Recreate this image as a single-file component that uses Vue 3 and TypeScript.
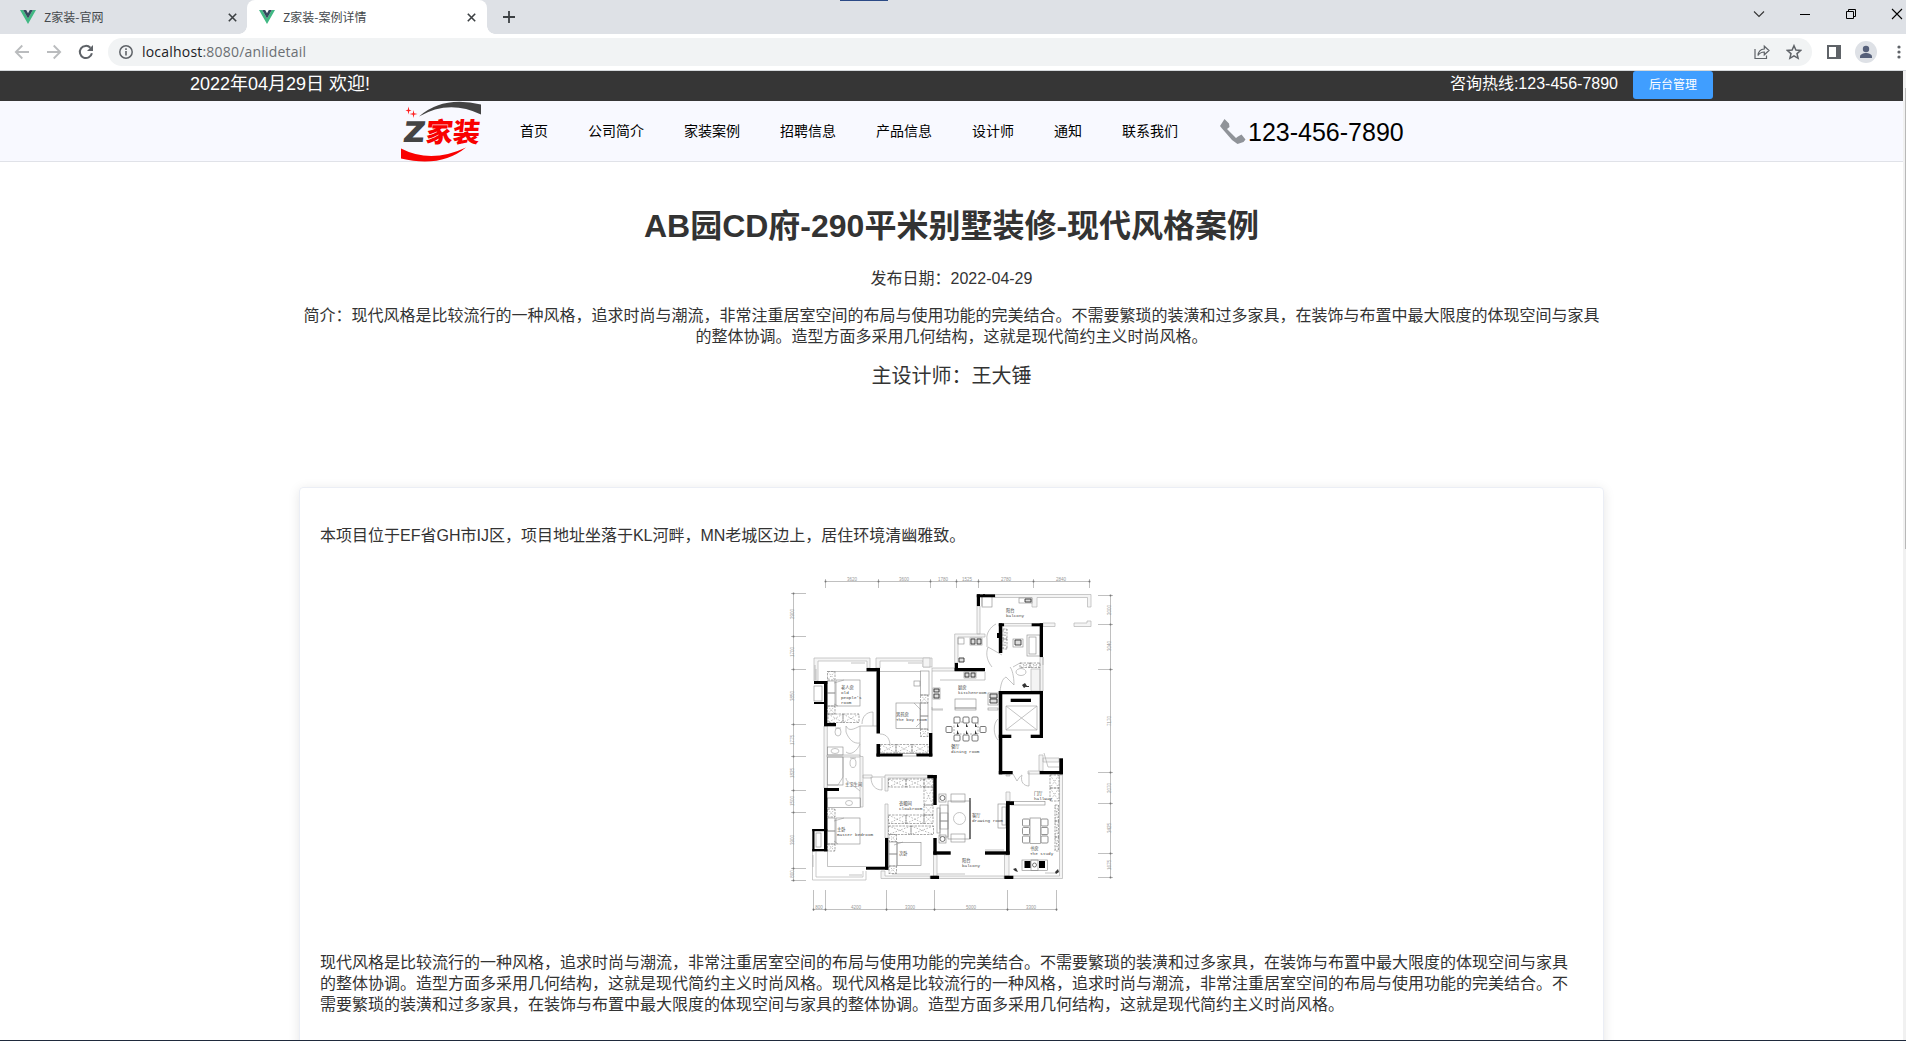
<script setup lang="ts">
type Box = [number, number, number, number]
interface Label { x: number; y: number; zh: string; en: string; en2?: string }

const tabs = [
  { title: 'Z家装-官网', active: false },
  { title: 'Z家装-案例详情', active: true },
]
const menu = ['首页', '公司简介', '家装案例', '招聘信息', '产品信息', '设计师', '通知', '联系我们']

const intro = [
  '简介：现代风格是比较流行的一种风格，追求时尚与潮流，非常注重居室空间的布局与使用功能的完美结合。不需要繁琐的装潢和过多家具，在装饰与布置中最大限度的体现空间与家具',
  '的整体协调。造型方面多采用几何结构，这就是现代简约主义时尚风格。',
]
const description = [
  '现代风格是比较流行的一种风格，追求时尚与潮流，非常注重居室空间的布局与使用功能的完美结合。不需要繁琐的装潢和过多家具，在装饰与布置中最大限度的体现空间与家具',
  '的整体协调。造型方面多采用几何结构，这就是现代简约主义时尚风格。现代风格是比较流行的一种风格，追求时尚与潮流，非常注重居室空间的布局与使用功能的完美结合。不',
  '需要繁琐的装潢和过多家具，在装饰与布置中最大限度的体现空间与家具的整体协调。造型方面多采用几何结构，这就是现代简约主义时尚风格。',
]

// Load-bearing walls as [left, top, right, bottom]
const walls: Box[] = [
  [866.5, 669, 880, 672.3], [876.5, 669, 880, 734.5],
  [814, 682, 827.3, 685], [824, 682, 827.3, 727], [824, 724, 836, 727.3], [814, 703, 824, 705],
  [929, 734, 932.3, 757.5], [876.5, 754.5, 902.5, 757.5], [916.5, 754.5, 932.3, 757.5], [876.5, 745, 880, 757.5],
  [954.7, 664, 958, 672], [954.7, 669, 985, 672.3],
  [976.8, 595.3, 995, 598.3], [976.8, 595.3, 980, 607],
  [998.8, 624.3, 1002.3, 654], [998.8, 624.3, 1004, 627.3], [1031.7, 624.3, 1043, 627.3], [1039.7, 624.3, 1043, 658], [997, 634, 999, 639],
  [998.8, 692, 1043, 695.3], [998.8, 692, 1002.3, 775.3], [1039.7, 692, 1043, 739], [998.8, 735.7, 1011.3, 739], [1030.7, 735.7, 1043, 739],
  [1010.7, 699.7, 1031, 703],
  [998.8, 772, 1012.7, 775.3], [1039.7, 772, 1063, 775.3], [1059.3, 759.3, 1063, 775.3],
  [1006, 802.3, 1014, 806], [1006, 802.3, 1009.7, 855.7], [985, 852.3, 1009.7, 855.7], [933.3, 852.3, 950.7, 855.7], [933.3, 839, 936.7, 855.7],
  [1004.3, 876.7, 1013.3, 880], [930.3, 876.7, 939, 880],
  [927.3, 776, 936.7, 779.3], [933.3, 776, 936.7, 806],
  [885, 839, 888.3, 870.7], [866, 867.7, 888.3, 870.7],
  [824, 789, 827.3, 852.3], [824, 789, 839, 792],
  [812.3, 830, 827.3, 832.2], [812.3, 830, 814.5, 852.3], [812.3, 850, 827.3, 852.3],
  [1024.5, 862, 1030.5, 869], [1039, 862, 1045, 869],
]

// Wardrobes and cabinets, drawn with crossed panels
const cabinets: Box[] = [
  [828, 715, 843, 723.5], [843, 715, 859, 723.5],
  [880.5, 745.5, 896, 754], [896, 745.5, 912, 754], [912, 745.5, 928, 754],
  [888.5, 780, 906, 788], [906, 780, 924, 788], [924, 780, 933, 788],
  [924, 788, 933, 806], [924, 806, 933, 816],
  [888.5, 816, 906, 824.5], [906, 816, 924, 824.5], [924, 816, 933, 824.5],
  [888.5, 827, 911, 835.5], [911, 827, 933.5, 835.5],
  [827.5, 672.5, 835, 681], [827.5, 707, 835, 715], [920.5, 696, 928, 704], [920.5, 730, 928, 737.5],
  [827.5, 810, 835, 818], [827.5, 845, 835, 852], [889, 835.5, 896.5, 842.5], [889, 867, 896.5, 874.5],
  [1020, 664, 1030, 668.5], [1030, 664, 1040, 668.5],
  [1003, 630, 1007, 640], [1003, 640, 1007, 650],
  [1050, 776, 1059, 789], [1050, 789, 1059, 802],
  [1055, 806, 1058.5, 822], [1055, 822, 1058.5, 838], [1055, 838, 1058.5, 852],
]

const outlines: Box[] = [
  [836, 681, 860, 707], [827.5, 682, 835, 694], [827.5, 694, 835, 707],
  [896, 704, 920, 729.5], [920.5, 704, 928, 717], [920.5, 717, 928, 730],
  [836, 819, 860, 845], [827.5, 819, 835, 832], [827.5, 832, 835, 845],
  [897, 843.5, 921, 866.5], [889, 843, 897, 855], [889, 855, 897, 867],
  [920.5, 672, 929, 696], [914, 682, 920, 687],
  [955, 700, 976, 709], [955, 709, 976, 711],
  [827.5, 758, 843, 786], [827.5, 799, 860.5, 808.5], [827.5, 748, 843, 756],
  [902.5, 754.5, 916.5, 757], [988, 694, 998, 706], [988, 709, 998, 711],
  [1027, 636, 1040, 657], [1029, 638, 1036, 655], [1013, 640, 1023, 648],
  [940, 806, 948, 838], [937, 809, 940, 834], [940, 814, 948, 822], [940, 822, 948, 830],
  [948, 802, 970, 840], [951, 795, 965, 803], [951, 835, 965, 843],
  [939, 795, 946, 803], [939, 836, 946, 844],
  [998, 805, 1006, 829], [1002, 808, 1006, 826],
  [1022, 861, 1047.5, 871.5], [1031, 861, 1038, 871.5],
  [982, 596.5, 992, 608], [1019, 599, 1032, 604], [970, 639, 982, 646], [958, 639, 964, 645], [964, 673, 976, 679],
  [933, 689, 940, 700], [814, 687, 822, 702], [816, 834, 821, 848], [1011, 802.5, 1045, 806],
]

const dining: [number, number][] = [
  [954, 718], [963, 718], [972, 718], [954, 736], [963, 736], [972, 736], [946, 727.5], [980, 727.5],
]
const studyChairs: [number, number][] = [
  [1022.5, 820], [1022.5, 828.5], [1022.5, 837], [1041, 820], [1041, 828.5], [1041, 837],
]

const topTicks = [825.5, 878.5, 930.5, 956.5, 978.5, 1033.5, 1089.5]
const topLabels = [[852, '3620'], [904, '3600'], [943, '1780'], [967, '1525'], [1006, '2780'], [1061, '2840']] as [number, string][]
const leftTicks = [594.5, 637.5, 670.5, 725.5, 757.5, 791.5, 813.5, 869.5, 881.5]
const leftLabels = [[615, '2900'], [653, '1700'], [697, '3850'], [741, '1775'], [774, '1825'], [802, '1500'], [841, '3900'], [875, '800']] as [number, string][]
const rightTicks = [596.5, 625.5, 670.5, 773.5, 804.5, 854.5, 878.5]
const rightLabels = [[611, '2000'], [647, '3040'], [722, '7170'], [789, '2070'], [829, '3425'], [866, '1675']] as [number, string][]
const bottomTicks = [813.5, 825.5, 886.5, 934.5, 1007.5, 1056.5]
const bottomLabels = [[819, '800'], [856, '4200'], [910, '3300'], [971, '5000'], [1031, '3300']] as [number, string][]

const rooms: Label[] = [
  { x: 841, y: 690, zh: '老人房', en: 'old', en2: "people's" },
  { x: 896, y: 716.5, zh: '男孩房', en: 'The boy room' },
  { x: 958, y: 690, zh: '厨房', en: 'kitchenroom' },
  { x: 951, y: 748.5, zh: '餐厅', en: 'dining room' },
  { x: 972, y: 818, zh: '客厅', en: 'drawing room' },
  { x: 962, y: 863, zh: '阳台', en: 'balcony' },
  { x: 1030, y: 851, zh: '书房', en: 'The study' },
  { x: 837, y: 832, zh: '主卧', en: 'master bedroom' },
  { x: 1034, y: 796, zh: '门厅', en: 'hallway' },
  { x: 899, y: 805.5, zh: '衣帽间', en: 'cloakroom' },
  { x: 1006, y: 613, zh: '阳台', en: 'balcony' },
  { x: 899, y: 856, zh: '次卧', en: '' },
  { x: 845, y: 787, zh: '主卫生间', en: '' },
]

const crossPath = ([l, t, r, b]: Box): string => `M${l} ${t}L${r} ${b}M${r} ${t}L${l} ${b}`
</script>

<template>
  <div class="window">
    <div class="tabstrip">
      <div class="top-sliver"></div>
      <div v-for="tab in tabs" :key="tab.title" class="tab" :class="{ active: tab.active }">
        <svg class="vue" width="16" height="14" viewBox="0 0 16 14">
          <path d="M0 0h3.2L8 8.4 12.8 0H16L8 14z" fill="#41b883" />
          <path d="M3.2 0h3L8 3.2 9.8 0h3L8 8.4z" fill="#35495e" />
        </svg>
        <span class="tab-title">{{ tab.title }}</span>
        <svg class="tab-x" width="9" height="9" viewBox="0 0 9 9"><path d="M.8.8l7.4 7.4M8.2.8L.8 8.2" stroke="#3c4043" stroke-width="1.6" /></svg>
      </div>
      <svg class="plus" width="12" height="12" viewBox="0 0 12 12"><path d="M6 0v12M0 6h12" stroke="#3c4043" stroke-width="1.8" /></svg>
      <div class="controls">
        <svg width="12" height="12" viewBox="0 0 12 12"><path d="M1 3.5l5 5 5-5" fill="none" stroke="#333" stroke-width="1.1" /></svg>
        <svg width="12" height="12" viewBox="0 0 12 12"><path d="M1 6.5h10" stroke="#000" /></svg>
        <svg width="12" height="12" viewBox="0 0 12 12"><path d="M1.5 3.5h7v7h-7zM3.5 3.5v-2h7v7h-2" fill="none" stroke="#000" /></svg>
        <svg width="12" height="12" viewBox="0 0 12 12"><path d="M1 1l10 10M11 1L1 11" stroke="#000" stroke-width="1.1" /></svg>
      </div>
    </div>

    <div class="toolbar">
      <div class="nav-icons">
        <svg width="16" height="16" viewBox="0 0 16 16"><path d="M15 8H2M8.3 1.5L1.8 8l6.5 6.5" fill="none" stroke="#babcbe" stroke-width="1.8" /></svg>
        <svg width="16" height="16" viewBox="0 0 16 16"><path d="M1 8h13M7.7 1.5L14.2 8l-6.5 6.5" fill="none" stroke="#babcbe" stroke-width="1.8" /></svg>
        <svg width="16" height="16" viewBox="0 0 16 16"><path d="M13.9 9.3A6.1 6.1 0 1 1 12.4 3.8" fill="none" stroke="#5f6368" stroke-width="2" /><path d="M15 1v6H9z" fill="#5f6368" /></svg>
      </div>
      <div class="omnibox">
        <svg width="14" height="14" viewBox="0 0 14 14"><circle cx="7" cy="7" r="6.2" fill="none" stroke="#5f6368" stroke-width="1.5" /><path d="M7 6v4.500M7 3.300v1.600" stroke="#5f6368" stroke-width="1.6" /></svg>
        <span class="url"><b>localhost</b>:8080/anlidetail</span>
        <svg class="share" width="16" height="16" viewBox="0 0 16 16"><path d="M1 5v9.500h11.500v-3" fill="none" stroke="#5f6368" stroke-width="1.2" /><path d="M4 11.500c.3-4 2.500-6.300 6.300-6.500V2.200l4.700 4.300-4.700 4.300V8C7.500 8 5.500 9.200 4 11.500z" fill="none" stroke="#5f6368" stroke-width="1.2" /></svg>
        <svg width="16" height="16" viewBox="0 0 16 16"><path d="M8 1.700l1.900 4.400 4.700.4-3.600 3.100 1.100 4.700L8 11.800l-4.100 2.500L5 9.600 1.400 6.500l4.700-.4z" fill="none" stroke="#5f6368" stroke-width="1.5" /></svg>
      </div>
      <svg class="panel" width="14" height="14" viewBox="0 0 14 14"><path d="M0 0h14v14H0zM2 2v10h7V2z" fill="#5f6368" fill-rule="evenodd" /></svg>
      <svg class="avatar" width="22" height="22" viewBox="0 0 22 22"><circle cx="11" cy="11" r="11" fill="#dee1e6" /><circle cx="11" cy="8" r="3.2" fill="#56607a" /><path d="M5 17v-1.500c0-2.300 3.500-3.500 6-3.500s6 1.200 6 3.500V17z" fill="#56607a" /></svg>
      <svg class="dots" width="4" height="14" viewBox="0 0 4 14"><g fill="#5f6368"><circle cx="2" cy="2" r="1.6" /><circle cx="2" cy="7" r="1.6" /><circle cx="2" cy="12" r="1.6" /></g></svg>
    </div>

    <div class="viewport">
      <main class="page">
        <div class="topbar">
          <span class="today">2022年04月29日 欢迎!</span>
          <span class="hotline">咨询热线:123-456-7890</span>
          <button class="admin">后台管理</button>
        </div>

        <header class="header">
          <svg class="logo" width="80" height="60" viewBox="0 0 80 60">
            <path d="M18 14.500Q42-6.500 80 2.500V12.500Q48-3 18 14.500z" fill="#444" />
            <path d="M0 46.500Q30 62 65 45.500Q40 66 0 56.500z" fill="#f90000" />
            <path d="M7.500 4.500l.7 3.300 2.300.7-2.300.7-.7 3.300-.7-3.300-2.300-.7 2.300-.7zM12.500 8l.7 3.300 3.300.7-3.300.7-.7 3.300-.7-3.300-3.300-.7 3.300-.7z" fill="#f22" />
            <text transform="translate(1.5 40) skewX(-8)" class="logo-z" textLength="21" lengthAdjust="spacingAndGlyphs">Z</text>
            <text transform="translate(24 39.7) skewX(-6)" class="logo-cn" textLength="54" lengthAdjust="spacingAndGlyphs">家装</text>
          </svg>
          <nav class="menu">
            <a v-for="item in menu" :key="item">{{ item }}</a>
          </nav>
          <svg class="phone" width="26" height="25" viewBox="0 0 26 25"><path d="M4.500 0L9 4.500 9.500 8 7 10l9 9 2-1.500 3.500-2 4 5-2 2.500-6 2L12 21 2 9.500 0 7z" fill="#909399" /></svg>
          <span class="phone-number">123-456-7890</span>
        </header>

        <section class="summary">
          <h1>AB园CD府-290平米别墅装修-现代风格案例</h1>
          <p class="date">发布日期：2022-04-29</p>
          <p class="intro"><span v-for="line in intro" :key="line">{{ line }}</span></p>
          <p class="designer">主设计师：王大锤</p>
        </section>

        <article class="card">
          <p>本项目位于EF省GH市IJ区，项目地址坐落于KL河畔，MN老城区边上，居住环境清幽雅致。</p>

          <svg class="plan" width="350" height="355" viewBox="777 565 350 355">
            <!-- dimension chains -->
            <g stroke="#b0b0b0" stroke-width=".8" fill="none">
              <path d="M825 582.500H1090M793.500 594V882M1110.500 596V879M813 910.500H1057" />
              <path v-for="x in topTicks" :key="'t' + x" :d="`M${x} 580V589`" />
              <path v-for="y in leftTicks" :key="'l' + y" :d="`M791 ${y}H806`" />
              <path v-for="y in rightTicks" :key="'r' + y" :d="`M1098 ${y}H1113`" />
              <path v-for="x in bottomTicks" :key="'b' + x" :d="`M${x} 891V912`" />
            </g>
            <g fill="#777">
              <circle v-for="x in topTicks" :key="x" :cx="x" cy="582.5" r="1" />
              <circle v-for="y in leftTicks" :key="y" cx="793.5" :cy="y" r="1" />
              <circle v-for="y in rightTicks" :key="y" cx="1110.5" :cy="y" r="1" />
              <circle v-for="x in bottomTicks" :key="x" :cx="x" cy="910.5" r="1" />
            </g>
            <g class="dim">
              <text v-for="[x, s] in topLabels" :key="x" :x="x" y="582">{{ s }}</text>
              <text v-for="[x, s] in bottomLabels" :key="x" :x="x" y="910">{{ s }}</text>
              <text v-for="[y, s] in leftLabels" :key="y" :transform="`translate(793.5 ${y}) rotate(-90)`">{{ s }}</text>
              <text v-for="[y, s] in rightLabels" :key="y" :transform="`translate(1110.5 ${y}) rotate(-90)`">{{ s }}</text>
            </g>

            <!-- thin outer walls and windows -->
            <g fill="#f4f4f4" stroke="#b5b5b5" stroke-width=".7">
              <path d="M814 659H870V669H867V662H818V682H814z" />
              <path d="M876 659H932V668H923V662H880V669H876z" />
              <path d="M923 659h7v9h-7z" />
              <path d="M932 669H955V672H932z" />
              <path d="M995 595.500H1091V608H1087.500V598.500H1037V608H1032V598.500H995z" />
              <path d="M1043 624H1055V627.500H1043zM1074 624H1087V622H1091V627.500H1074zM1004 624.500H1032V627H1004z" />
              <path d="M977 607H980V635H977zM954.700 635H985V638H958V664H954.700z" />
              <path d="M1040 658H1043V692H1040zM1031 670H1040V692H1031z" />
              <path d="M824 727H827.300V789H824z" />
              <path d="M812.500 852V881H866V872M816 852V878H863V872" fill="none" />
              <path d="M881 872V879.500H930V877H885V872zM939 877H1004V879.500H939zM1013 877H1059.500V776H1062.500V879.500H1013z" />
              <path d="M885 776H933V779H888V792H885zM885 805H888V839H885z" />
              <path d="M860 757.500H863V808H860zM827 756H860V758H827zM863 776H872V779H863z" />
              <path d="M1006 776H1010V777H1006zM1006 793H1010V802H1006zM1028 772H1040V775H1028zM1039 756H1043V772H1039zM1043 759H1059V763H1043z" />
              <path d="M1004.500 856H1009V877H1004.500zM933.500 856H937V877H933.500z" />
            </g>
            <g fill="none" stroke="#aaa" stroke-width=".7">
              <path d="M827 672.500H876M880 672.500H920M932 672V757M827.500 852V867.500H866M940 681H985V673M860 727H880M860 727V757M932 710H943M932 708V711H943" />
              <path d="M862 725C862 717 867 713 873 713V727M880 735C887 735 890 740 890 747M860 727C854 730 849 733 846 727V733C849 741 854 745 860 744M846 753C851 757 857 752 860 745" />
              <path d="M871 778C871 787 876 791 882 791V779M860 792C852 785 846 783 846 779M872 778H885M982 607V596M996 625C990 628 986 635 987 640M997 638M987 640V648M1002 656L988 648C985 656 988 663 992 668M1000 692C1001 685 1002 680 1006 678L1014 686C1014 677 1012 670 1010 668" />
              <path d="M1013 775L1017 782C1020 777 1022 776 1022 776C1020 783 1024 787 1029 787V773M1013 668L1020 664M1043 658V666M827.500 786H838L843 778V758" />
              <path d="M834 684L844 681M834 705L838 707M914 704L921 711M916 728L921 723M834 822L844 819M834 842L838 845M894 846L903 843" />
              <circle cx="959.5" cy="819.5" r="6" />
              <ellipse cx="838" cy="733" rx="3" ry="4" /><path d="M835 729H841" />
              <ellipse cx="853" cy="764" rx="3" ry="4.5" /><path d="M850 759H856" />
              <ellipse cx="1021" cy="673" rx="5" ry="3.5" />
              <ellipse cx="835" cy="752" rx="4" ry="2.5" /><ellipse cx="849" cy="804" rx="3.5" ry="2.5" />
              <path d="M1006 707H1037V731H1006zM1006 707L1037 731M1037 707L1006 731" />
              <path d="M998 720C993 724 993 736 998 741M815 666V681M851 664H865M908 664H922M813 856V868M849 876H862M892 875H930M937 875H965M985 851H1004M1045 874H1056M1044 754L1048 768H1059M816 670V681" />
            </g>

            <g fill="none" stroke="#888" stroke-width=".6">
              <rect v-for="(b, i) in outlines" :key="'o' + i" :x="b[0]" :y="b[1]" :width="b[2] - b[0]" :height="b[3] - b[1]" />
            </g>
            <g fill="none" stroke="#888" stroke-width=".7">
              <g v-for="(b, i) in cabinets" :key="'c' + i">
                <rect :x="b[0]" :y="b[1]" :width="b[2] - b[0]" :height="b[3] - b[1]" stroke-dasharray="2.5 1" />
                <path :d="crossPath(b)" stroke-dasharray="1.5 1.5" stroke-width=".6" />
              </g>
            </g>
            <g fill="#fff" stroke="#555" stroke-width=".8">
              <rect x="954" y="723" width="24" height="12" stroke-dasharray="2 1.5" stroke="#999" />
              <rect v-for="([x, y], i) in dining" :key="'d' + i" :x="x" :y="y" width="6" height="6" rx="1" />
              <rect v-for="([x, y], i) in studyChairs" :key="'s' + i" :x="x" :y="y" width="7" height="7" rx="1" stroke="#777" />
              <rect x="1030" y="819" width="10.5" height="25.5" stroke="#999" />
              <path d="M970 799V840" stroke-width="1.5" />
              <circle cx="942.5" cy="799" r="2.5" /><circle cx="942.5" cy="840" r="2.5" /><circle cx="1034.5" cy="866" r="2" />
            </g>
            <!-- hobs, sinks and appliances -->
            <g fill="#ddd" stroke="#333" stroke-width=".9">
              <path d="M971 640h4v5h-4zM977 640h4v5h-4zM959 659h5v4h-5zM965 674h4v4h-4zM971 674h4v4h-4zM934 690h5v3h-5zM934 695h5v4h-5zM1025 600h6v3h-6zM1015 641h6v5h-6zM990 695h7v4h-7zM990 700h7v4h-7z" />
            </g>
            <g fill="#333">
              <path d="M1022 686l3-2 2 3-3 2zM1026 687h3v1h-3zM1013 870l3-1 2 4-3-1zM1055 873l3-3 1 3-3 2zM957 724l2 4-2 0zM966 724l2 4-2 0zM975 724l2 4-2 0zM957 731l2 4-2 0zM966 731l2 4-2 0zM975 731l2 4-2 0zM983 595h2v1h-2z" />
            </g>

            <g fill="#000">
              <rect v-for="(b, i) in walls" :key="'w' + i" :x="b[0]" :y="b[1]" :width="b[2] - b[0]" :height="b[3] - b[1]" />
            </g>

            <g class="room">
              <g v-for="(r, i) in rooms" :key="i">
                <text :x="r.x" :y="r.y">{{ r.zh }}</text>
                <text :x="r.x" :y="r.y + 5">{{ r.en }}</text>
                <template v-if="r.en2">
                  <text :x="r.x" :y="r.y + 10">{{ r.en2 }}</text>
                  <text :x="r.x" :y="r.y + 15">room</text>
                </template>
              </g>
            </g>
          </svg>

          <p class="desc"><span v-for="line in description" :key="line">{{ line }}</span></p>
        </article>
      </main>
      <div class="scrollbar"><div class="thumb"></div></div>
    </div>
    <div class="taskbar-edge"></div>
  </div>
</template>

<style>
body {
  margin: 0;
  overflow: hidden;
}
</style>

<style scoped>
.window {
  width: 1906px;
  height: 1041px;
  display: flex;
  flex-direction: column;
  overflow: hidden;
  background: #fff;
  font-family: "Liberation Sans", "Noto Sans CJK SC", sans-serif;
}
svg { display: block; flex: none; }
p, h1 { margin: 0; }

.tabstrip {
  position: relative;
  height: 34px;
  flex: none;
  display: flex;
  align-items: center;
  background: #dee1e6;
}
.top-sliver {
  position: absolute;
  left: 840px;
  top: 0;
  width: 48px;
  height: 1px;
  background: #2b4a86;
}
.tab {
  position: relative;
  box-sizing: border-box;
  width: 247px;
  height: 34px;
  padding: 0 10px 0 20px;
  display: flex;
  align-items: center;
  font: 12px/16px "Noto Sans CJK SC", sans-serif;
  color: #45494d;
}
.tab.active {
  width: 240px;
  padding-left: 12px;
  padding-right: 11px;
  background: #fff;
  border-radius: 8px 8px 0 0;
}
.tab.active::before,
.tab.active::after {
  content: "";
  position: absolute;
  bottom: 0;
  width: 8px;
  height: 8px;
}
.tab.active::before { left: -8px; background: radial-gradient(circle at 0 0, transparent 7.5px, #fff 8px); }
.tab.active::after { right: -8px; background: radial-gradient(circle at 100% 0, transparent 7.5px, #fff 8px); }
.tab-title { flex: 1; margin-left: 8px; white-space: nowrap; }
.plus { margin-left: 16px; }
.controls { margin-left: auto; margin-bottom: 6px; padding-right: 3px; display: flex; gap: 34px; }

.toolbar {
  box-sizing: border-box;
  height: 37px;
  flex: none;
  padding: 4px 5px 4px 14px;
  display: flex;
  align-items: center;
  border-bottom: 1px solid #d5d9dc;
}
.nav-icons { display: flex; gap: 16px; width: 94px; }
.omnibox {
  box-sizing: border-box;
  width: 1704px;
  height: 28px;
  padding: 0 10px 0 11px;
  display: flex;
  align-items: center;
  border-radius: 14px;
  background: #f1f3f4;
}
.url {
  flex: 1;
  margin-left: 9px;
  font: 14px/20px "Open Sans", sans-serif;
  letter-spacing: 0.2px;
  color: #6b6f73;
}
.url b { font-weight: 400; color: #202124; }
.share { margin-right: 16px; }
.panel { margin-left: 15px; }
.avatar { margin-left: 14px; }
.dots { margin-left: auto; }

.viewport { flex: 1; min-height: 0; display: flex; overflow: hidden; }
.page { width: 1903px; flex: none; color: #333; }
.scrollbar { width: 3px; background: #f1f1f1; padding-top: 17px; }
.thumb { height: 461px; margin-left: 2px; background: #b8b8b8; }
.taskbar-edge { height: 1px; flex: none; background: #1f2a3c; }

.topbar {
  height: 30px;
  padding: 0 190px;
  display: flex;
  background: #363636;
  color: #fff;
}
.today { font-size: 18px; line-height: 26px; }
.hotline { margin-left: auto; font-size: 16px; line-height: 26px; }
.admin {
  width: 80px;
  height: 28px;
  margin-left: 15px;
  padding: 0;
  border: 0;
  border-radius: 3px;
  background: #409eff;
  color: #fff;
  font: 12px/28px "Liberation Sans", "Noto Sans CJK SC", sans-serif;
}

.header {
  height: 60px;
  padding-left: 401px;
  display: flex;
  align-items: center;
  background: #f8f9ff;
  border-bottom: 1px solid #e0e2e8;
}
.logo { overflow: visible; position: relative; top: 1px; }
.logo-z { font: 900 29px "Open Sans", sans-serif; fill: #444; }
.logo-cn { font: 900 27px "Noto Sans CJK SC", sans-serif; fill: #f90000; }
.menu {
  margin-left: 39px;
  margin-bottom: 1px;
  display: flex;
  gap: 40px;
  font-size: 14px;
  line-height: 20px;
  color: #000;
}
.phone { margin-left: 42px; margin-top: 1px; }
.phone-number { margin: 2px 0 0 2px; font-size: 25px; line-height: 30px; color: #000; }

.summary { text-align: center; overflow: hidden; }
.summary h1 { margin-top: 42px; font-size: 32px; line-height: 44px; }
.date { margin-top: 20px; font-size: 16px; line-height: 22px; }
.intro { margin-top: 15px; font-size: 16px; line-height: 21px; }
.intro span, .desc span { display: block; white-space: nowrap; }
.designer { margin-top: 16px; font-size: 20px; line-height: 26px; }

.card {
  box-sizing: border-box;
  width: 1305px;
  height: 620px;
  margin: 98px auto 0;
  padding: 37px 20px 0;
  border: 1px solid #ebeef5;
  border-radius: 4px;
  box-shadow: 0 2px 12px rgba(0, 0, 0, 0.1);
  font-size: 16px;
  line-height: 21px;
}
.plan { margin: 18px auto 0; }
.desc { margin-top: 33px; }
.dim { font: 4.5px "Liberation Sans", sans-serif; fill: #999; text-anchor: middle; }
.room { font: 4.3px "Liberation Mono", "Noto Sans CJK SC", monospace; fill: #444; }
</style>
